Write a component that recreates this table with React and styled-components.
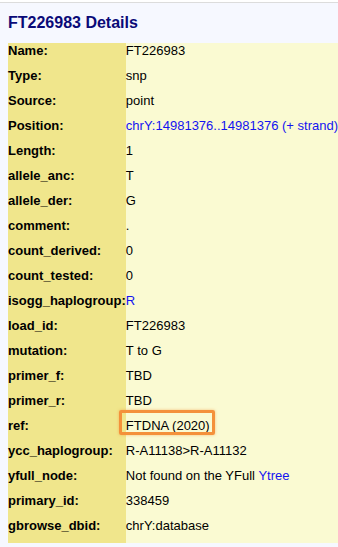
import styled, { createGlobalStyle } from "styled-components";

const GlobalStyle = createGlobalStyle`
	body {
		margin: 0;
		background: #ffffff;
		font-family: "Liberation Sans", Arial, sans-serif;
		overflow: hidden;
	}
`;

const Page = styled.div`
	margin-top: 2px;
	border-top: 1px solid #dcdcdc;
	background: #f6f8ff;
	padding: 0 0 4px 8px;
	min-height: 544px;
	box-sizing: border-box;
	overflow: hidden;
`;

const Title = styled.h3`
	margin: 0;
	padding: 10px 0 10px;
	font-size: 16px;
	line-height: 20px;
	font-weight: bold;
	color: #0a0a78;
`;

const Table = styled.table`
	border-collapse: collapse;
	border-spacing: 0;
	width: 100%;
	font-size: 13px;
	line-height: 15px;
`;

const Label = styled.td`
	width: 118px;
	height: 25px;
	padding: 0;
	vertical-align: top;
	background: #f0e68c;
	font-weight: bold;
	color: #000;
	white-space: nowrap;
`;

const Value = styled.td`
	position: relative;
	height: 25px;
	padding: 0;
	vertical-align: top;
	background: #fafad2;
	color: #000;
	white-space: nowrap;
`;

const Link = styled.span`
	color: #1414f0;
`;

const Highlight = styled.span`
	position: absolute;
	left: -7px;
	top: -8px;
	width: 96px;
	height: 25px;
	box-sizing: border-box;
	border: 3px solid #f4913a;
	border-radius: 2px;
	box-shadow: 0 0 3px rgba(240, 140, 50, 0.55);
`;

const rows = [
	["Name:", "FT226983"],
	["Type:", "snp"],
	["Source:", "point"],
	["Position:", <Link>chrY:14981376..14981376 (+ strand)</Link>],
	["Length:", "1"],
	["allele_anc:", "T"],
	["allele_der:", "G"],
	["comment:", "."],
	["count_derived:", "0"],
	["count_tested:", "0"],
	["isogg_haplogroup:", <Link>R</Link>],
	["load_id:", "FT226983"],
	["mutation:", "T to G"],
	["primer_f:", "TBD"],
	["primer_r:", "TBD"],
	["ref:", <>FTDNA (2020)<Highlight /></>],
	["ycc_haplogroup:", "R-A11138>R-A11132"],
	["yfull_node:", <>Not found on the YFull <Link>Ytree</Link></>],
	["primary_id:", "338459"],
	["gbrowse_dbid:", "chrY:database"],
];

function App() {
	return (
		<>
			<GlobalStyle />
			<Page>
				<Title>FT226983 Details</Title>
				<Table>
					<tbody>
						{rows.map(([label, value]) => (
							<tr key={label}>
								<Label>{label}</Label>
								<Value>{value}</Value>
							</tr>
						))}
					</tbody>
				</Table>
			</Page>
		</>
	);
}

export default App;
